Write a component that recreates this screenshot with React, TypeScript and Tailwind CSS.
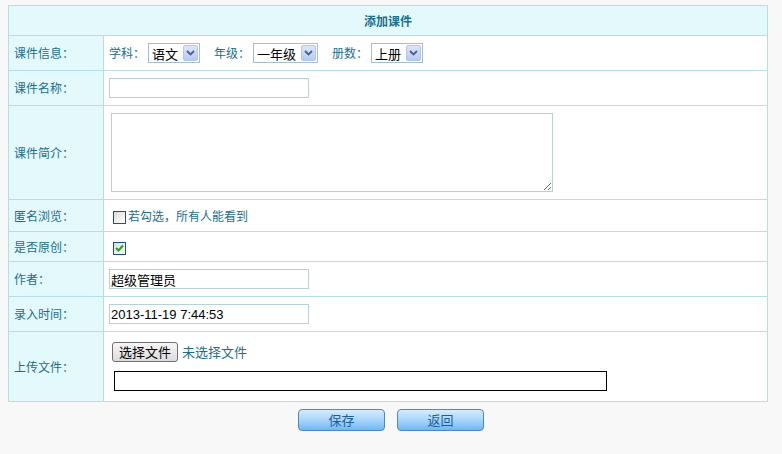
const labelCls =
  "w-[95px] border border-[#b7dde6] bg-[#e4f9fb] pl-[5px] text-left align-middle font-normal text-[#1c6f8c]";
const cellCls = "border border-[#b7dde6] bg-white pl-[5px] align-middle";

function FakeSelect({ value, width }: { value: string; width: string }) {
  return (
    <span
      className={`inline-flex h-[20px] items-center justify-between border border-[#a5bfd0] bg-white pl-[3px] pr-[1px] align-middle text-[13px] text-black ${width}`}
    >
      <span>{value}</span>
      <span className="flex h-[16px] w-[15px] items-center justify-center rounded-[2px] border border-[#b3c7ec] bg-gradient-to-b from-[#dce6fb] to-[#b7c9f3]">
        <svg width="9" height="6" viewBox="0 0 9 6">
          <path d="M1 1 L4.5 4.5 L8 1" fill="none" stroke="#4d6185" strokeWidth="1.8" />
        </svg>
      </span>
    </span>
  );
}

function Box({ checked }: { checked?: boolean }) {
  return (
    <span className="inline-flex h-[13px] w-[13px] items-center justify-center border border-[#1c5180] bg-gradient-to-br from-[#dcdcd6] to-[#ffffff] align-middle">
      {checked && (
        <svg width="9" height="8" viewBox="0 0 9 8">
          <path d="M1 4 L3.5 6.5 L8 1.5" fill="none" stroke="#21a121" strokeWidth="2" />
        </svg>
      )}
    </span>
  );
}

function Btn({ text }: { text: string }) {
  return (
    <button className="h-[22px] w-[87px] rounded-[4px] border border-[#4a8bc4] bg-gradient-to-b from-[#d6ecfd] via-[#a9d5fa] to-[#6fb7f2] text-[13px] text-[#1c5f92]">
      {text}
    </button>
  );
}

export default function App() {
  return (
    <div
      className="min-h-[454px] w-[782px] bg-[#f8f8f8] pt-[5px] text-[12px]"
      style={{ fontFamily: '"Noto Sans CJK SC", "Liberation Sans", sans-serif' }}
    >
      <table className="ml-[8px] w-[760px] border-collapse">
        <tbody>
          <tr className="h-[30px]">
            <th
              colSpan={2}
              className="border border-[#b7dde6] bg-[#e4f9fb] text-center align-middle text-[12px] font-bold text-[#1c6f8c]"
            >
              添加课件
            </th>
          </tr>
          <tr className="h-[35px]">
            <td className={labelCls}>课件信息：</td>
            <td className={cellCls}>
              <div className="flex items-center text-[#1c6f8c]">
                <span>学科：</span>
                <span className="ml-[3px]">
                  <FakeSelect value="语文" width="w-[52px]" />
                </span>
                <span className="ml-[14px]">年级：</span>
                <span className="ml-[3px]">
                  <FakeSelect value="一年级" width="w-[65px]" />
                </span>
                <span className="ml-[14px]">册数：</span>
                <span className="ml-[3px]">
                  <FakeSelect value="上册" width="w-[52px]" />
                </span>
              </div>
            </td>
          </tr>
          <tr className="h-[35px]">
            <td className={labelCls}>课件名称：</td>
            <td className={cellCls}>
              <input className="block h-[20px] w-[200px] border border-[#b7d0da] bg-white px-[1px] text-[13px] outline-none" />
            </td>
          </tr>
          <tr className="h-[94px]">
            <td className={labelCls}>课件简介：</td>
            <td className={cellCls}>
              <textarea className="ml-[2px] block h-[79px] w-[442px] border border-[#b7d0da] bg-white outline-none" />
            </td>
          </tr>
          <tr className="h-[32px]">
            <td className={labelCls}>匿名浏览：</td>
            <td className={cellCls}>
              <div className="flex items-center text-[#1c6f8c]">
                <span className="ml-[4px]">
                  <Box />
                </span>
                <span className="ml-[2px]">若勾选，所有人能看到</span>
              </div>
            </td>
          </tr>
          <tr className="h-[30px]">
            <td className={labelCls}>是否原创：</td>
            <td className={cellCls}>
              <div className="flex items-center">
                <span className="ml-[4px]">
                  <Box checked />
                </span>
              </div>
            </td>
          </tr>
          <tr className="h-[35px]">
            <td className={labelCls}>作者：</td>
            <td className={cellCls}>
              <input
                defaultValue="超级管理员"
                className="block h-[20px] w-[200px] border border-[#b7d0da] bg-white px-[1px] text-[13px] text-black outline-none"
              />
            </td>
          </tr>
          <tr className="h-[35px]">
            <td className={labelCls}>录入时间：</td>
            <td className={cellCls}>
              <input
                defaultValue="2013-11-19 7:44:53"
                className="block h-[20px] w-[200px] border border-[#b7d0da] bg-white px-[1px] text-[13px] text-black outline-none"
                style={{ fontFamily: '"Liberation Sans", sans-serif' }}
              />
            </td>
          </tr>
          <tr className="h-[70px]">
            <td className={labelCls}>上传文件：</td>
            <td className={cellCls}>
              <div className="flex flex-col">
                <div className="flex items-center">
                  <span className="ml-[3px] inline-flex h-[20px] items-center rounded-[3px] border border-[#707070] bg-gradient-to-b from-[#f6f6f6] to-[#dcdcdc] px-[6px] text-[13px] text-black">
                    选择文件
                  </span>
                  <span className="ml-[4px] text-[13px] text-[#1c6f8c]">未选择文件</span>
                </div>
                <div className="ml-[5px] mt-[9px] h-[20px] w-[493px] border border-black bg-white" />
              </div>
            </td>
          </tr>
        </tbody>
      </table>
      <div className="mt-[7px] flex justify-center gap-[12px]">
        <Btn text="保存" />
        <Btn text="返回" />
      </div>
    </div>
  );
}
